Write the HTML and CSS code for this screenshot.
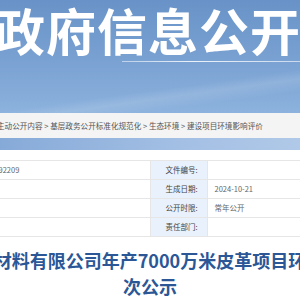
FILE: index.html
```html
<!DOCTYPE html>
<html lang="zh-CN">

<head>
    <meta charset="UTF-8">
    <meta name="viewport" content="width=device-width, initial-scale=1.0">
    <title>政府信息公开</title>
    <link rel="stylesheet" href="styles.css">
</head>

<body>
    <!-- 顶部横幅 -->
    <div class="banner">
        <h1 class="banner-title">政府信息公开</h1>
        <div class="banner-rule"></div>
    </div>

    <!-- 当前位置 -->
    <div class="crumbs">
        <div class="wrap crumbs-inner">首页 &gt; 政府信息公开 &gt; 主动公开内容 &gt; 基层政务公开标准化规范化 &gt; 生态环境 &gt; 建设项目环境影响评价</div>
    </div>
    <div class="bluebar"></div>

    <div class="wrap">
        <!-- 文件属性 -->
        <table class="meta">
            <colgroup>
                <col class="label-col">
                <col class="value-col">
                <col class="label-col">
                <col class="value-col">
            </colgroup>
            <tbody>
                <tr>
                    <th>索引号:</th>
                    <td>00014349/2024-92209</td>
                    <th>文件编号:</th>
                    <td></td>
                </tr>
                <tr>
                    <th>发布机构:</th>
                    <td>市生态环境局</td>
                    <th>生成日期:</th>
                    <td>2024-10-21</td>
                </tr>
                <tr>
                    <th>主题分类:</th>
                    <td>生态环境</td>
                    <th>公开时限:</th>
                    <td>常年公开</td>
                </tr>
                <tr>
                    <th>关键词:</th>
                    <td>环评</td>
                    <th>责任部门:</th>
                    <td></td>
                </tr>
            </tbody>
        </table>

        <h2 class="headline">关于衡水东方新材料有限公司年产7000万米皮革项目环境影响评价第二次公示</h2>
    </div>
</body>

</html>
```

FILE: styles.css
```css
body {
    margin: 0;
    padding: 0;
    overflow: hidden;
    font-family: "Noto Sans CJK SC", "Noto Sans", sans-serif;
    background: #fff;
}

/* 页面主体比窗口宽，居中在 150px 处 */
.wrap {
    width: 544px;
    margin-left: -122px;
}

.banner {
    height: 113px;
    overflow: hidden;
    background:
        linear-gradient(172deg, rgba(255, 255, 255, 0) 72%, rgba(255, 255, 255, 0.12) 78%, rgba(255, 255, 255, 0) 86%),
        linear-gradient(180deg, #6993c8 0%, #78a0d1 50%, #8cb2dd 100%);
}

.banner-title {
    margin: 0 0 0 -5px;
    padding-top: 4px;
    font-size: 50px;
    line-height: 50px;
    font-weight: 700;
    letter-spacing: 1px;
    color: #fff;
    white-space: nowrap;
}

/* 标题下方细线 */
.banner-rule {
    height: 1px;
    margin: 7px 0 0 122px;
    background: linear-gradient(to right, rgba(255, 255, 255, 0.5), rgba(255, 255, 255, 0.85) 40%, rgba(255, 255, 255, 0.6));
}

.crumbs {
    height: 25px;
    background: #f4f4f4;
    overflow: hidden;
}

.crumbs-inner {
    box-sizing: border-box;
    padding-left: 43px;
    font-size: 7.6px;
    line-height: 25px;
    color: #555;
    white-space: nowrap;
}

.bluebar {
    height: 12px;
    background: linear-gradient(to right, #86aad8, #a3bfe4 60%, #b0c9e8);
}

.meta {
    width: 100%;
    margin-top: 10px;
    border-collapse: collapse;
    table-layout: fixed;
    font-size: 7.5px;
}

.meta .label-col {
    width: 57px;
}

.meta th,
.meta td {
    height: 18px;
    padding: 0;
    border: 1px solid #e6e6e6;
    line-height: 18px;
    white-space: nowrap;
    overflow: hidden;
}

.meta th {
    padding-right: 9px;
    text-align: right;
    font-weight: 400;
    color: #444;
    background: #e9f2fc;
}

.meta td {
    padding-left: 7px;
    text-align: left;
    color: #666;
}

/* 标题比表格略宽，仍以 150px 为中心 */
.headline {
    margin: 10px -14px 0;
    font-size: 18px;
    line-height: 26px;
    font-weight: 700;
    text-align: center;
    color: #2b5797;
}
```
